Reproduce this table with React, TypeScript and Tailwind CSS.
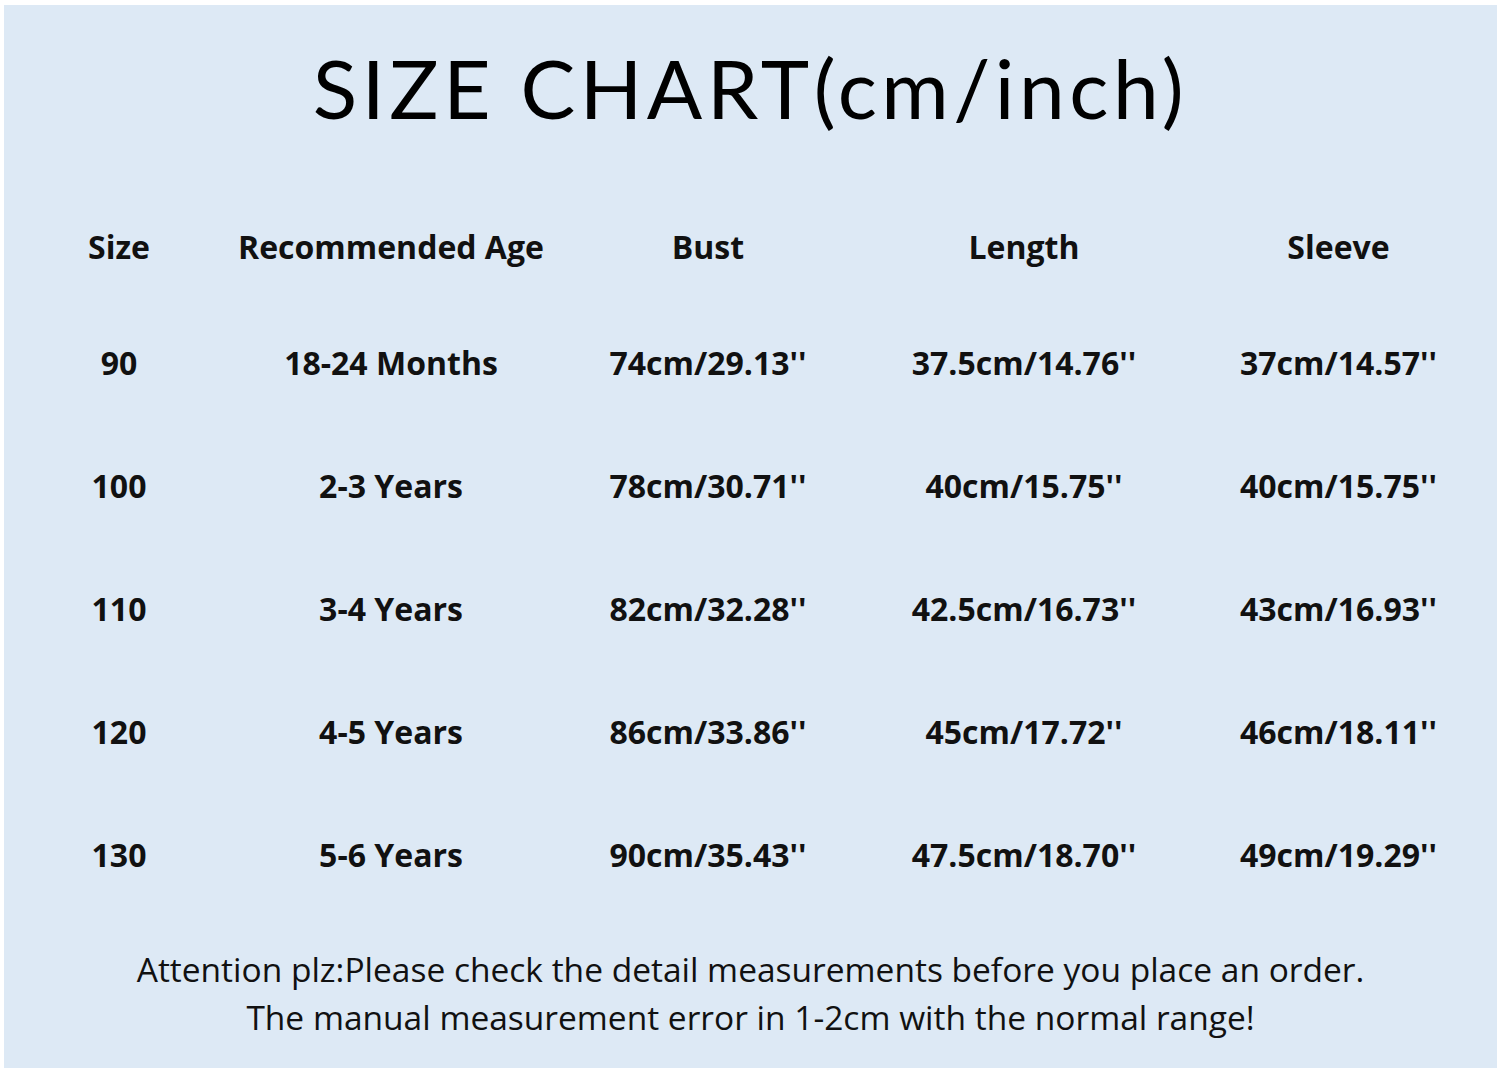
const headers = ["Size", "Recommended Age", "Bust", "Length", "Sleeve"];

const rows = [
  ["90", "18-24 Months", "74cm/29.13''", "37.5cm/14.76''", "37cm/14.57''"],
  ["100", "2-3 Years", "78cm/30.71''", "40cm/15.75''", "40cm/15.75''"],
  ["110", "3-4 Years", "82cm/32.28''", "42.5cm/16.73''", "43cm/16.93''"],
  ["120", "4-5 Years", "86cm/33.86''", "45cm/17.72''", "46cm/18.11''"],
  ["130", "5-6 Years", "90cm/35.43''", "47.5cm/18.70''", "49cm/19.29''"],
];

const cols = "grid grid-cols-[230px_314px_320px_312px_317px]";

export default function App() {
  return (
    <div className="w-[1500px] h-[1073px] bg-white pt-[5px] pl-[4px] pr-[3px] pb-[5px]">
      <div className="h-full bg-[#dde9f5] flex flex-col text-[#111]">
        <h1
          className="h-[188px] pt-[41px] text-center text-[82px] leading-none font-normal tracking-[4.5px] text-black"
          style={{ fontFamily: "Lato, 'DejaVu Sans', sans-serif" }}
        >
          SIZE CHART(cm/inch)
        </h1>

        <div style={{ fontFamily: "'Open Sans', 'Noto Sans', sans-serif" }}>
          <div className={`${cols} h-[108px] items-center text-[32px] font-bold`}>
            {headers.map((h) => (
              <div key={h} className="text-center">
                {h}
              </div>
            ))}
          </div>
          {rows.map((r) => (
            <div key={r[0]} className={`${cols} h-[123px] items-center text-[32px] font-bold`}>
              {r.map((c, i) => (
                <div key={i} className="text-center">
                  {c}
                </div>
              ))}
            </div>
          ))}
        </div>

        <div
          className="mt-[29px] text-center text-[33.5px] leading-[48px] text-[#111]"
          style={{ fontFamily: "'Open Sans', 'Noto Sans', sans-serif" }}
        >
          <p>Attention plz:Please check the detail measurements before you place an order.</p>
          <p>The manual measurement error in 1-2cm with the normal range!</p>
        </div>
      </div>
    </div>
  );
}
